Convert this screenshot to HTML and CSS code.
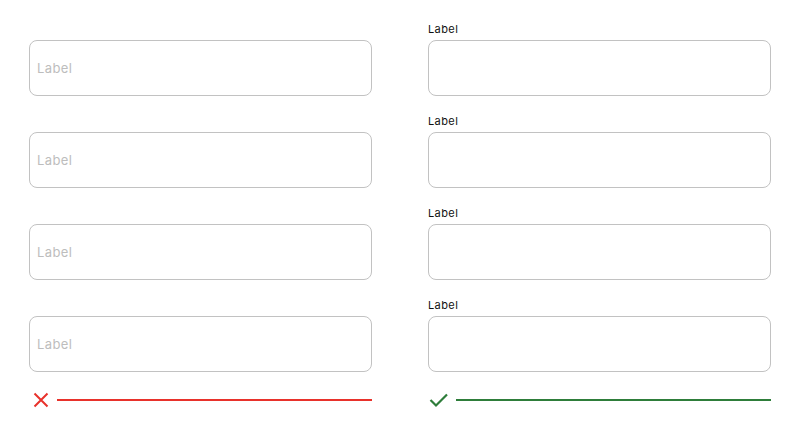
FILE: index.html
```html
<!DOCTYPE html>
<html lang="en">
<head>
  <meta charset="UTF-8">
  <meta name="viewport" content="width=device-width, initial-scale=1.0">
  <title>Input labels</title>
  <link rel="stylesheet" href="styles.css">
</head>
<body>
  <div class="compare">
    <div class="column">
      <div class="field">
        <span class="label"></span>
        <input type="text" placeholder="Label">
      </div>
      <div class="field">
        <span class="label"></span>
        <input type="text" placeholder="Label">
      </div>
      <div class="field">
        <span class="label"></span>
        <input type="text" placeholder="Label">
      </div>
      <div class="field">
        <span class="label"></span>
        <input type="text" placeholder="Label">
      </div>
      <div class="verdict bad">
        <svg width="16" height="16" viewBox="0 0 16 16">
          <path d="M1.5 1.5 L14.5 14.5 M14.5 1.5 L1.5 14.5" stroke="#e8322b" stroke-width="2" fill="none"/>
        </svg>
        <span class="rule"></span>
      </div>
    </div>

    <div class="column">
      <div class="field">
        <label class="label" for="f1">Label</label>
        <input type="text" id="f1">
      </div>
      <div class="field">
        <label class="label" for="f2">Label</label>
        <input type="text" id="f2">
      </div>
      <div class="field">
        <label class="label" for="f3">Label</label>
        <input type="text" id="f3">
      </div>
      <div class="field">
        <label class="label" for="f4">Label</label>
        <input type="text" id="f4">
      </div>
      <div class="verdict good">
        <svg width="20" height="16" viewBox="0 0 20 16">
          <path d="M1.5 8 L7 13.5 L18 2.5" stroke="#2e7d3a" stroke-width="2.2" fill="none"/>
        </svg>
        <span class="rule"></span>
      </div>
    </div>
  </div>
</body>
</html>
```

FILE: styles.css
```css
body {
  margin: 0;
  background: #fff;
  font-family: Inter, "Noto Sans", sans-serif;
}

.compare {
  display: grid;
  grid-template-columns: 343px 343px;
  column-gap: 56px;
  padding: 23px 29px 0 29px;
}

.column {
  display: flex;
  flex-direction: column;
  gap: 19px;
}

.field {
  display: flex;
  flex-direction: column;
  gap: 4px;
}

.label {
  display: block;
  height: 13px;
  line-height: 13px;
  font-size: 11px;
  letter-spacing: 0.4px;
  color: #111;
}

input {
  box-sizing: border-box;
  width: 100%;
  height: 56px;
  padding: 0 7px;
  border: 1px solid #c2c2c2;
  border-radius: 8px;
  font-family: inherit;
  font-size: 13px;
  letter-spacing: 0.4px;
  outline: none;
}

input::placeholder {
  color: #bdbdbd;
}

.verdict {
  display: flex;
  align-items: center;
  height: 18px;
}

.verdict svg {
  flex: none;
}

.bad svg {
  margin: 0 8px 0 4px;
}

.good svg {
  margin: 0 7px 0 1px;
}

.rule {
  flex: 1;
  height: 2px;
}

.bad .rule {
  background: #e8322b;
}

.good .rule {
  background: #2e7d3a;
}
```
